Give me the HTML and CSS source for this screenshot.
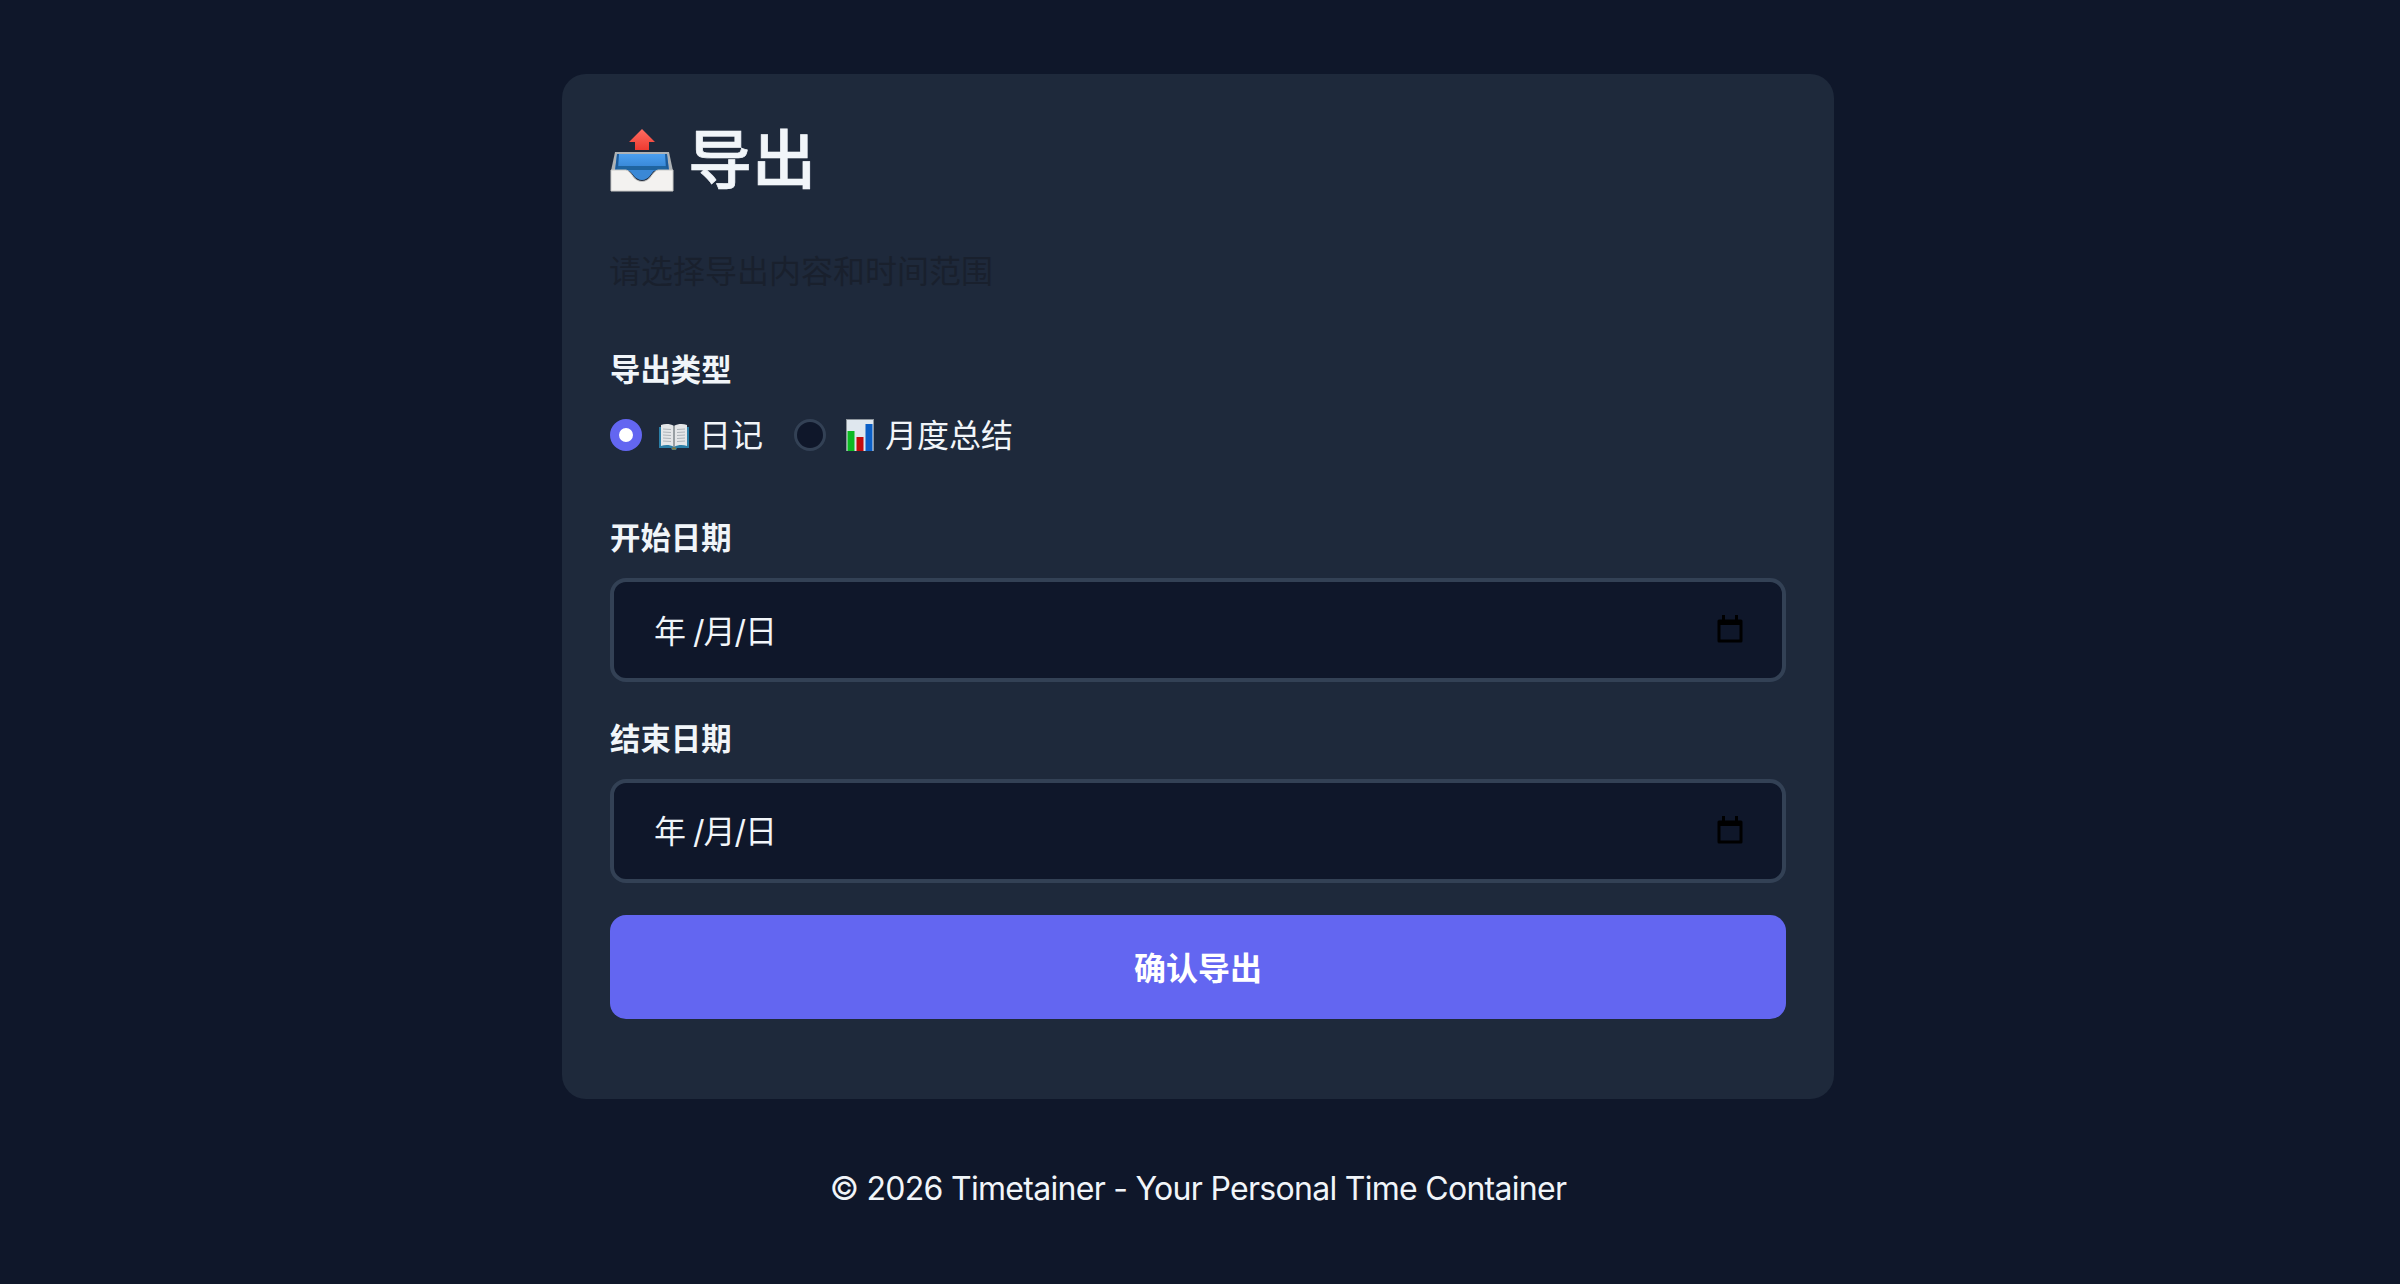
FILE: index.html
```html
<!DOCTYPE html>
<html lang="zh-CN">
<head>
    <meta charset="UTF-8">
    <meta name="viewport" content="width=device-width, initial-scale=1.0">
    <title>导出 - Timetainer</title>
    <link rel="stylesheet" href="styles.css">
</head>
<body>

<div class="card">
    <h1 class="title">
        <!-- Outbox tray icon -->
        <svg class="title-icon" width="64" height="64" viewBox="0 0 64 64">
            <defs>
                <linearGradient id="tray-blue" x1="0" y1="0" x2="0" y2="1">
                    <stop offset="0" stop-color="#4b9ff0"/>
                    <stop offset="0.7" stop-color="#3a8ad9"/>
                    <stop offset="1" stop-color="#2d72bb"/>
                </linearGradient>
                <linearGradient id="arrow-red" x1="0" y1="0" x2="0" y2="1">
                    <stop offset="0" stop-color="#ff6d62"/>
                    <stop offset="1" stop-color="#ee3a30"/>
                </linearGradient>
            </defs>
            <path d="M32 1 L45 14 L39 14 L39 22 L25 22 L25 14 L19 14 Z" fill="url(#arrow-red)"/>
            <path d="M5 24 L59 24 L63 43 L1 43 Z" fill="#aeb2b5"/>
            <path d="M7 26 L57 26 L59 43 L5 43 Z" fill="url(#tray-blue)"/>
            <path d="M7 26 L9 26 L8 41 L5 43 Z M57 26 L55 26 L56 41 L59 43 Z" fill="#1c5a99"/>
            <path d="M8 38 L56 38 L58 43 L6 43 Z" fill="#1f649f"/>
            <path d="M18 42 L45 42 C41 45 39 52 32 52 C25 52 23 45 18 42 Z" fill="#3a88d6"/>
            <path d="M1 42 L16 42 C22 43 23 53.500 32 53.500 C41 53.500 42 43 48 42 L63 42 L63 63 L1 63 Z" fill="#f3f2f0" stroke="#c9c9c7" stroke-width="1"/>
        </svg>
        <span>导出</span>
    </h1>
    <p class="subtitle">请选择导出内容和时间范围</p>

    <div class="form-group type-group">
        <div class="field-label">导出类型</div>
        <div class="radio-row">
            <div class="radio-item">
                <span class="radio checked"></span>
                <svg class="radio-icon" width="32" height="32" viewBox="0 0 32 32">
                    <path d="M1 8 L1 29 L13 29 L14 31 L18 31 L19 29 L31 29 L31 8 Z" fill="#2b7ea6"/>
                    <path d="M16 7 C12 4.500 7 4.500 3 6 L3 27 C7 25.500 12 25.500 16 28 C20 25.500 25 25.500 29 27 L29 6 C25 4.500 20 4.500 16 7 Z" fill="#e4e6e8"/>
                    <path d="M16 7 L16 28" stroke="#7f878d" stroke-width="1.500"/>
                    <path d="M5 10 L13 10.500 M5 13 L13 13.500 M5 16 L13 16.500 M5 19 L13 19.500 M5 22 L13 22.500 M19 10.500 L27 10 M19 13.500 L27 13 M19 16.500 L27 16 M19 19.500 L27 19 M19 22.500 L27 22" stroke="#aeb4b9" stroke-width="1"/>
                    <rect x="14" y="28.500" width="4" height="2" fill="#8a7a3a"/>
                </svg>
                <span class="radio-text">日记</span>
            </div>
            <div class="radio-item">
                <span class="radio"></span>
                <svg class="radio-icon" width="34" height="32" viewBox="-2 0 34 32">
                    <rect x="2" y="0" width="28" height="32" fill="#dfe7ee"/>
                    <path d="M2 0 H30 V32 H29 V1 H3 V32 H2 Z" fill="#8d959c"/>
                    <rect x="3.500" y="12" width="7" height="20" fill="#0cb922"/>
                    <rect x="12.500" y="18" width="7" height="14" fill="#c40c0c"/>
                    <rect x="21.500" y="5" width="7" height="27" fill="#0b5fc6"/>
                </svg>
                <span class="radio-text">月度总结</span>
            </div>
        </div>
    </div>

    <div class="form-group">
        <div class="field-label">开始日期</div>
        <div class="date-input">
            <span class="date-text">年 /月/日</span>
            <svg class="calendar-icon" width="26" height="28" viewBox="0 0 26 28">
                <path d="M2 6 H24 V26 H2 Z" fill="none" stroke="#000" stroke-width="3" stroke-linejoin="round"/>
                <path d="M2 5 H24 V10 H2 Z M5 0 H8 V5 H5 Z M18 0 H21 V5 H18 Z" fill="#000"/>
            </svg>
        </div>
    </div>

    <div class="form-group">
        <div class="field-label">结束日期</div>
        <div class="date-input">
            <span class="date-text">年 /月/日</span>
            <svg class="calendar-icon" width="26" height="28" viewBox="0 0 26 28">
                <path d="M2 6 H24 V26 H2 Z" fill="none" stroke="#000" stroke-width="3" stroke-linejoin="round"/>
                <path d="M2 5 H24 V10 H2 Z M5 0 H8 V5 H5 Z M18 0 H21 V5 H18 Z" fill="#000"/>
            </svg>
        </div>
    </div>

    <button class="submit-button" type="button">确认导出</button>
</div>

<div class="footer">© 2026 Timetainer - Your Personal Time Container</div>

</body>
</html>
```
FILE: styles.css
```css
body {
    font-family: Inter, "Noto Sans CJK SC", sans-serif;
    margin: 0;
    padding: 74px 4px 0 0;
    background-color: #0f172a;
    color: #f1f5f9;
}

.card {
    box-sizing: border-box;
    width: 1272px;
    height: 1025px;
    margin: 0 auto;
    padding: 48px;
    background-color: #1e293b;
    border-radius: 24px;
}

.title {
    display: flex;
    align-items: center;
    gap: 14px;
    height: 76px;
    margin: 0 0 50px;
    font-size: 64px;
    font-weight: 500;
    line-height: 80px;
    -webkit-text-stroke: 0.7px #f1f5f9;
}

.title-icon {
    flex: none;
}

.subtitle {
    margin: 0 0 50px -1px;
    font-size: 32px;
    line-height: 48px;
    color: #19202d;
}

.form-group {
    margin-bottom: 32.5px;
}

.type-group {
    margin-bottom: 54px;
}

.field-label {
    margin-bottom: 16px;
    font-size: 30.4px;
    font-weight: 600;
    line-height: 48px;
}

.radio-row {
    display: flex;
    gap: 31px;
}

.radio-item {
    display: flex;
    align-items: center;
    height: 50px;
    font-size: 32px;
    line-height: 48px;
}

.radio-text {
    padding-top: 2px;
}

.radio {
    box-sizing: border-box;
    width: 32px;
    height: 32px;
    margin-right: 16px;
    background-color: #0f172a;
    border: 3px solid #334155;
    border-radius: 50%;
}

.radio.checked {
    background-color: #fff;
    border: 9px solid #6366f1;
}

.radio-icon {
    flex: none;
    margin-right: 9px;
}

.date-input {
    box-sizing: border-box;
    display: flex;
    align-items: center;
    justify-content: space-between;
    height: 104px;
    padding: 0 39px 0 40px;
    font-size: 32px;
    letter-spacing: -1px;
    background-color: #0f172a;
    border: 4px solid #334155;
    border-radius: 16px;
}

.date-text {
    padding-bottom: 3px;
}

.calendar-icon {
    margin-bottom: 2px;
}

.submit-button {
    display: block;
    width: 100%;
    height: 104px;
    padding: 0 0 3px;
    font-family: inherit;
    font-size: 32px;
    font-weight: 600;
    color: #fff;
    background-color: #6366f1;
    border: none;
    border-radius: 16px;
}

.footer {
    margin-top: 66px;
    text-align: center;
    font-size: 32px;
    line-height: 48px;
    letter-spacing: -0.71px;
}
```
